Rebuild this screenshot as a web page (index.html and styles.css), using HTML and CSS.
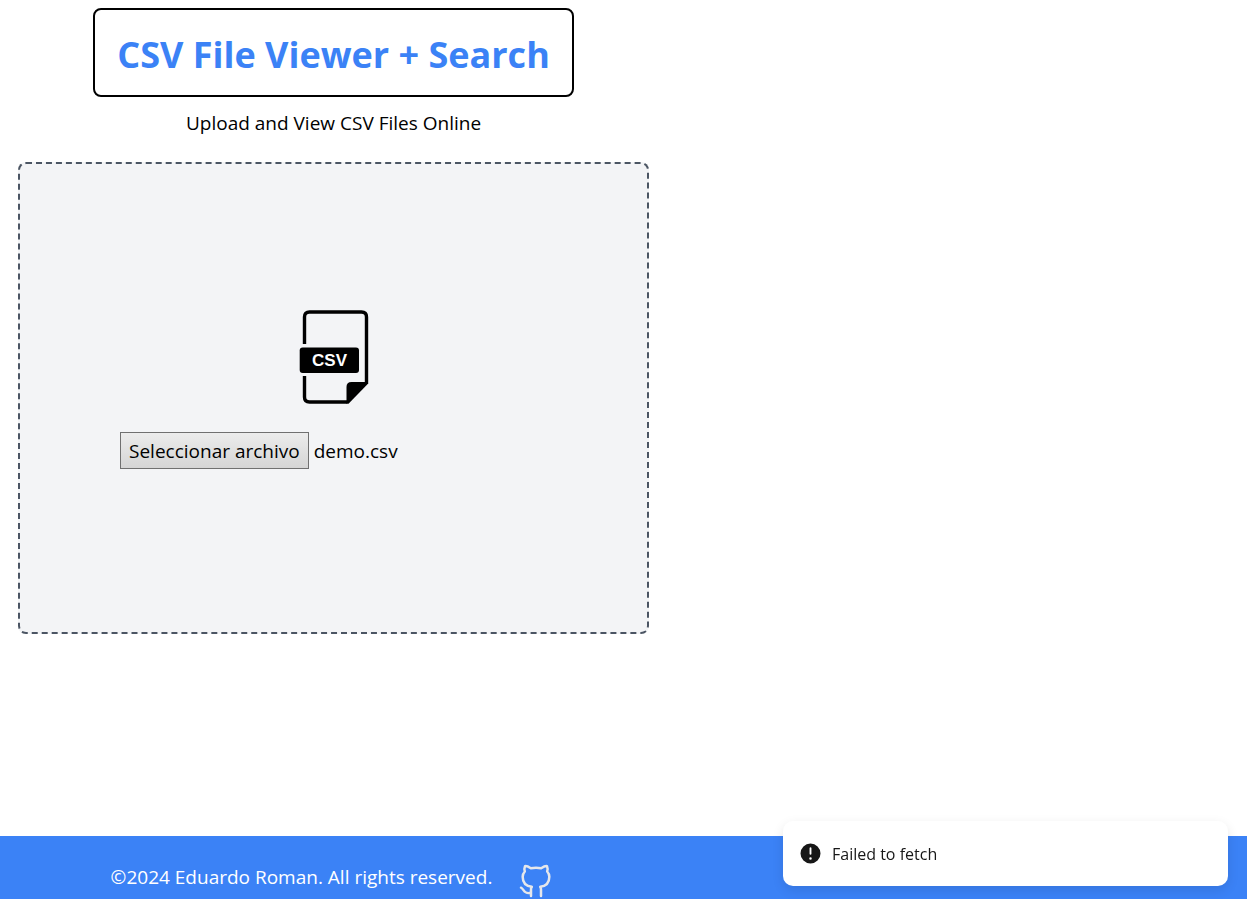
FILE: index.html
```html
<!DOCTYPE html>
<html lang="en">
<head>
<meta charset="utf-8">
<meta name="viewport" content="width=device-width, initial-scale=1">
<title>CSV File Viewer + Search</title>
<link rel="stylesheet" href="styles.css">
</head>
<body>
<main class="viewer">
  <h1 class="title">CSV File Viewer + Search</h1>
  <p class="subtitle">Upload and View CSV Files Online</p>
  <form class="dropzone">
    <svg class="file-icon" viewBox="0 0 70 96" aria-hidden="true">
      <path d="M5.500 35V8Q5.500 3 10.500 3H62.500Q67.500 3 67.500 8V73M5.500 67V88Q5.500 93 10.500 93H48" fill="none" stroke="#000" stroke-width="3.400"/>
      <path d="M47.500 94.700V78Q47.500 73 52.500 73H69.200V74.500L49.500 94.700Z"/>
      <rect x="0.700" y="38.500" width="59.300" height="25.500" rx="3"/>
      <text class="file-icon-text" x="30.500" y="57" text-anchor="middle">CSV</text>
    </svg>
    <div class="picker">
      <label class="picker-button" for="csv-file">Seleccionar archivo</label>
      <span>demo.csv</span>
      <input class="picker-input" type="file" id="csv-file" accept=".csv">
    </div>
  </form>
</main>
<footer class="footer">
  <div class="footer-content">
    <p class="copyright">©2024 Eduardo Roman. All rights reserved.</p>
    <a class="repo-link" href="https://github.com" aria-label="GitHub">
      <svg class="repo-icon" viewBox="0 0 24 24" fill="none" stroke="currentColor" stroke-width="1.500" stroke-linecap="round" stroke-linejoin="round">
        <path d="M9 19c-4.300 1.400-4.300-2.500-6-3m12 5v-3.500c0-1 .1-1.400-.5-2 2.800-.3 5.500-1.400 5.500-6a4.600 4.600 0 0 0-1.300-3.200 4.200 4.200 0 0 0-.1-3.200s-1.100-.3-3.500 1.300a12.300 12.300 0 0 0-6.200 0C6.500 2.800 5.400 3.100 5.400 3.100a4.200 4.200 0 0 0-.1 3.200A4.600 4.600 0 0 0 4 9.500c0 4.600 2.700 5.700 5.500 6-.6.600-.6 1.200-.5 2V21"/>
      </svg>
    </a>
  </div>
</footer>
<div class="toast" role="status">
  <svg class="toast-icon" viewBox="0 0 20 20" fill="currentColor" aria-hidden="true">
    <path fill-rule="evenodd" clip-rule="evenodd" d="M18 10a8 8 0 1 1-16 0 8 8 0 0 1 16 0Zm-8-5a.75.75 0 0 1 .75.75v4.500a.75.75 0 0 1-1.500 0v-4.500A.75.75 0 0 1 10 5Zm0 10a1 1 0 1 0 0-2 1 1 0 0 0 0 2Z"/>
  </svg>
  <span>Failed to fetch</span>
</div>
</body>
</html>
```
FILE: styles.css
```css
* {
  box-sizing: border-box;
}

body {
  margin: 0;
  min-height: 100vh;
  display: flex;
  flex-direction: column;
  overflow: hidden;
  background: #fff;
  color: #000;
  font-family: "Open Sans", "Noto Sans", sans-serif;
  font-size: 19px;
  line-height: 28px;
}

.viewer {
  flex: 1;
  width: 100%;
  max-width: 667px;
  padding: 8px 18px 0;
  display: flex;
  flex-direction: column;
  align-items: center;
}

.title {
  margin: 0;
  padding: 22px 22px 18px;
  border: 2px solid #000;
  border-radius: 8px;
  color: #3b82f6;
  font-size: 36px;
  line-height: 45px;
  font-weight: 700;
}

.subtitle {
  margin: 12px 0 25px;
}

.dropzone {
  width: 100%;
  padding: 145px 100px 163px;
  display: flex;
  flex-direction: column;
  gap: 27px;
  border: 2px dashed #4b5563;
  border-radius: 8px;
  background: #f3f4f6;
}

.file-icon {
  width: 70px;
  height: 96px;
  align-self: center;
}

.file-icon-text {
  fill: #fff;
  font: 700 17px "Liberation Sans", sans-serif;
}

.picker {
  position: relative;
  display: flex;
  align-items: center;
  gap: 5px;
}

.picker-button {
  padding: 4px 8px 3px;
  border: 1px solid #707070;
  background: linear-gradient(#ececec, #d5d5d5);
}

.picker-input {
  position: absolute;
  inset: 0;
  width: 100%;
  opacity: 0;
  cursor: pointer;
}

.footer {
  height: 63px;
  padding: 25px 20px 0;
  background: #3b82f6;
  color: #fff;
}

.footer-content {
  display: flex;
  justify-content: center;
  gap: 24px;
  max-width: 627px;
}

.copyright {
  margin: 0;
  line-height: 32px;
}

.repo-link {
  color: #e5e7eb;
}

.repo-icon {
  display: block;
  width: 40px;
  height: 40px;
}

.toast {
  position: fixed;
  right: 19px;
  bottom: 13px;
  width: 445px;
  max-width: calc(100% - 38px);
  padding: 20px 15px;
  display: flex;
  align-items: center;
  gap: 9px;
  border-radius: 10px;
  background: #fff;
  color: #171717;
  font-size: 16px;
  line-height: 24px;
  font-weight: 400;
  box-shadow: 0 4px 12px rgba(0, 0, 0, 0.1);
}

.toast-icon {
  width: 25px;
  height: 25px;
}
```
